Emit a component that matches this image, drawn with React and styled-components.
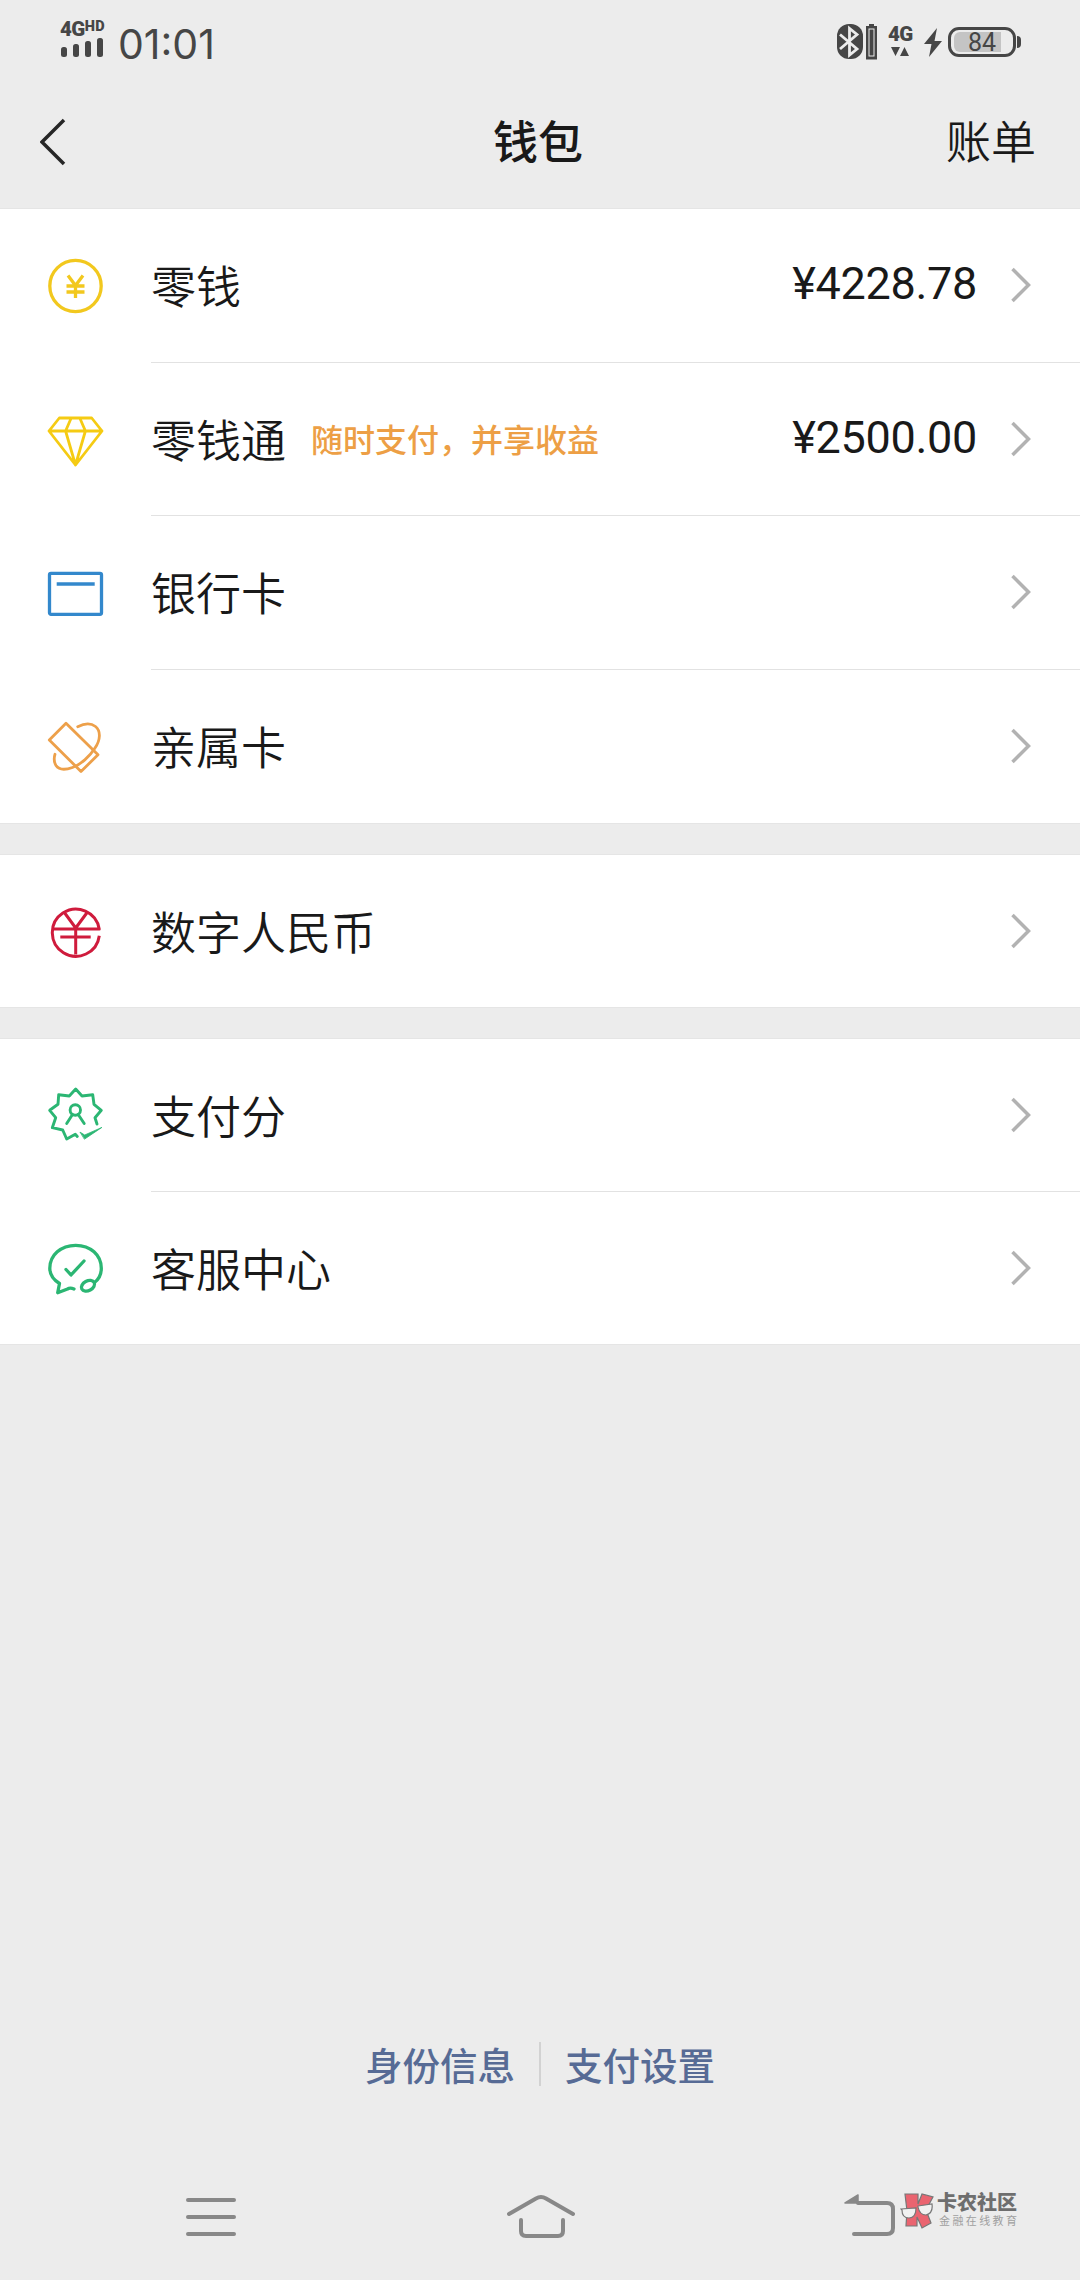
import React from 'react'
import styled, { createGlobalStyle } from 'styled-components'

const GlobalStyle = createGlobalStyle`
    * {
        box-sizing: border-box;
    }

    body {
        margin: 0;
        background: #ececec;
        font-family: 'Noto Sans CJK SC', sans-serif;
        color: #191919;
    }
`

const Page = styled.div`
    position: relative;
    display: flex;
    flex-direction: column;
    width: 1080px;
    height: 2280px;
    overflow: hidden;
    background: #ececec;
`

const StatusBar = styled.div`
    display: flex;
    justify-content: space-between;
    height: 78px;
    padding: 22px 59px 0 60px;
    color: #464646;
`

const StatusSide = styled.div`
    display: flex;
    align-items: flex-start;
`

const Signal = styled.div`
    display: flex;
    flex-direction: column;
    width: 47px;
`

const Network = styled.div`
    display: flex;
    align-items: flex-start;
    height: 15px;
    font: 900 20.5px/15px Roboto, sans-serif;
    letter-spacing: -0.6px;
    white-space: nowrap;
`

const Sup = styled.span`
    font-size: 14.5px;
    font-weight: 900;
    line-height: 10px;
    letter-spacing: 0.3px;
`

const Bars = styled.svg`
    display: block;
    width: 47px;
    height: 20px;
`

const Clock = styled.div`
    margin: 0 0 0 11px;
    font: 400 41px/45px Inter, sans-serif;
    letter-spacing: 0;
`

const StatusIcon = styled.svg`
    display: block;
    width: ${props => props.w}px;
    height: 36px;
    margin: 2px ${props => props.gap || 0}px 0 0;
`

const Mobile = styled.div`
    width: 26px;
    margin: 5px 10px 0 0;
`

const Arrows = styled.svg`
    display: block;
    width: 24px;
    height: 10px;
    margin-top: 5px;
`

const Battery = styled.div`
    display: flex;
    align-items: center;
    width: 68px;
    height: 30px;
    margin-top: 5px;
    padding: 3px;
    border: 3px solid #464646;
    border-radius: 11px;
`

const BatteryLevel = styled.div`
    width: 47px;
    height: 20px;
    padding-left: 14px;
    border-radius: 6px 0 0 6px;
    background: #c4c4c4;
    font: 400 25px/21px Roboto, sans-serif;
    white-space: nowrap;
`

const BatteryCap = styled.div`
    width: 4px;
    height: 12px;
    margin: 14px 0 0 1px;
    border-radius: 0 5px 5px 0;
    background: #464646;
`

const Header = styled.header`
    display: grid;
    grid-template-columns: 1fr auto 1fr;
    align-items: center;
    height: 131px;
    padding: 0 44px 3px 40px;
    border-bottom: 1px solid #e4e4e4;
`

const BackIcon = styled.svg`
    display: block;
    width: 26px;
    height: 48px;
`

const Title = styled.h1`
    margin: 0 0 4px;
    font-size: 45px;
    font-weight: 500;
    line-height: 60px;
`

const Bill = styled.span`
    justify-self: end;
    margin-bottom: 4px;
    font-size: 45px;
    font-weight: 350;
    line-height: 60px;
`

const Group = styled.section`
    display: flex;
    flex-direction: column;
    height: ${props => props.size}px;
    margin-bottom: 32px;
    background: #fff;
    box-shadow: 0 1px 0 #e5e5e5, 0 -1px 0 #e5e5e5;
`

const Row = styled.div`
    display: flex;
    flex: 1;
    align-items: stretch;
    padding-left: 45px;
`

const RowIcon = styled.svg`
    flex: none;
    align-self: center;
    width: 60px;
    height: 60px;
    margin-right: 46px;
    fill: none;
    stroke: ${props => props.color};
    stroke-width: 3.3;
    stroke-linecap: round;
    stroke-linejoin: round;
`

const RowBody = styled.div`
    display: flex;
    flex: 1;
    align-items: center;
    padding-right: 48px;
    border-bottom: ${props => props.last ? 'none' : '1px solid #e2e2e2'};
`

const Label = styled.span`
    font-size: 45px;
    font-weight: 350;
    line-height: 60px;
`

const Hint = styled.span`
    margin: 0 0 2px 25px;
    font-size: 32px;
    font-weight: 500;
    line-height: 44px;
    color: #ed9f45;
`

const Amount = styled.span`
    margin: 0 0 2px auto;
    font: 400 45px/60px Roboto, sans-serif;
    letter-spacing: -0.3px;
`

const Chevron = styled.svg`
    flex: none;
    width: 22px;
    height: 40px;
    margin-left: ${props => props.push ? '33px' : 'auto'};
`

const Links = styled.footer`
    display: flex;
    align-items: center;
    justify-content: center;
    gap: 24px;
    height: 60px;
    margin-top: auto;
    padding-bottom: 3px;
    color: #576b95;
    font-size: 37.5px;
    font-weight: 500;
    line-height: 50px;
`

const Divider = styled.i`
    width: 2px;
    height: 44px;
    background: #d2d2d2;
`

const NavBar = styled.nav`
    display: flex;
    align-items: flex-start;
    justify-content: space-between;
    height: 185px;
    padding: 99px 185px 0 185px;
`

const NavIcon = styled.svg`
    display: block;
    width: ${props => props.w}px;
    height: 46px;
    fill: none;
    stroke: #888;
    stroke-width: 4;
    stroke-linecap: round;
    stroke-linejoin: round;
`

// floats over the navigation bar
const Watermark = styled.div`
    position: absolute;
    right: 60px;
    bottom: 50px;
    display: flex;
    gap: 3px;
    width: 120px;
    height: 38px;
`

const WatermarkText = styled.div`
    display: flex;
    flex-direction: column;
    white-space: nowrap;
`

const WatermarkName = styled.span`
    color: #6e6e6e;
    font-size: 20px;
    font-weight: 900;
    line-height: 20px;
`

const WatermarkSub = styled.span`
    padding: 3px 0 0 2px;
    color: #a0a0a0;
    font-size: 11px;
    letter-spacing: 2.4px;
    line-height: 11px;
`

const icons = {
    coin: (
        <>
            <circle cx="30.5" cy="30" r="25.7" />
            <path d="M23 19.5l7.5 10 7.5-10M30.5 29.5V42M21.5 30h18M21.5 36h18" strokeLinecap="butt" />
        </>
    ),
    diamond: (
        <path d="M14.3 9h32.4L57 22 30.5 56 4 22zM4 22h53M26.2 9l-5.6 13 9.9 34 9.9-34-5.6-13" strokeWidth="2.8" />
    ),
    card: (
        <>
            <rect x="4.5" y="10.3" width="52" height="41" rx="1.5" />
            <path d="M11.7 21h38" strokeLinecap="butt" />
        </>
    ),
    family: (
        <>
            <path d="M21 7.2L4.3 24 36 55.5 53 38.8z" strokeWidth="2.8" />
            <path d="M32.7 10.7C39 7.5 46 7 50.5 10.5C56 15 55.5 24 50 32C45 40 36 48.5 27.5 51.5C21 53.8 14 54 11 49.5C9 46 8.8 42 10 38.3" strokeWidth="2.8" />
        </>
    ),
    digital: (
        <path d="M54.3 34.7A23.6 23.6 0 1 1 54.2 28H7.5M19 11l11.7 16L42.5 11M30.7 27v26.5M15.3 36h30.4" strokeWidth="3" strokeLinecap="butt" />
    ),
    score: (
        <>
            <path d="M32.3 51.5L30.3 49.3 21.7 54 17.7 45 7.3 42.7 10.7 32.7 4.7 25.3 13 19.3 13.7 9.7 24.3 11 30.7 4 37 11 47.7 9.7 49 19.3 56.3 25.3 50 32.7 52 39" strokeWidth="2.9" />
            <circle cx="30.3" cy="25" r="5.2" strokeWidth="2.9" />
            <path d="M27.5 29.5l-5.8 9M33.2 29.5l6 9" strokeWidth="2.9" />
            <path d="M35.3 47.3l4.4 2.7 17.2-7.6-17.2 11.6z" fill="#2bb673" strokeWidth="0.8" />
        </>
    ),
    service: (
        <>
            <path d="M29 51C26.5 50 24.5 49.8 22.5 51L12.7 54.7 14.5 45.5C8 41.5 4.8 36 4.8 30.3C4.8 17 16 7.3 30.7 7.3S56.3 17 56.3 30.3C56.3 36 53.5 41.5 49.5 44.5" />
            <ellipse cx="43" cy="47.8" rx="7" ry="4.8" transform="rotate(-28 43 47.8)" />
            <path d="M21 31.5l5 5.5L39 23" />
        </>
    ),
}

const groups = [
    {
        size: 614,
        rows: [
            { icon: 'coin', color: '#f2c81e', label: '零钱', amount: '¥4228.78' },
            { icon: 'diamond', color: '#f5cb13', label: '零钱通', hint: '随时支付，并享收益', amount: '¥2500.00' },
            { icon: 'card', color: '#3388cc', label: '银行卡' },
            { icon: 'family', color: '#eda04a', label: '亲属卡' },
        ],
    },
    {
        size: 152,
        rows: [{ icon: 'digital', color: '#cf1b3c', label: '数字人民币' }],
    },
    {
        size: 305,
        rows: [
            { icon: 'score', color: '#2bb673', label: '支付分' },
            { icon: 'service', color: '#2bb673', label: '客服中心' },
        ],
    },
]

function Status() {
    return (
        <StatusBar>
            <StatusSide>
                <Signal>
                    <Network>4G<Sup>HD</Sup></Network>
                    <Bars viewBox="0 0 47 20" fill="#464646">
                        <rect x="1" y="10" width="6" height="10" rx="2.5" />
                        <rect x="13" y="7" width="6" height="13" rx="2.5" />
                        <rect x="25" y="4" width="6" height="16" rx="2.5" />
                        <rect x="37" y="1" width="6" height="19" rx="2.5" />
                    </Bars>
                </Signal>
                <Clock>01:01</Clock>
            </StatusSide>
            <StatusSide>
                <StatusIcon w={26} gap={3} viewBox="0 0 26 36">
                    <rect width="26" height="35" rx="12" fill="#464646" />
                    <path d="M3 10.5L20 25l-7.500 6V4.500L20 10.500 3 25" fill="none" stroke="#ececec" strokeWidth="2.8" />
                </StatusIcon>
                <StatusIcon w={11} gap={11} viewBox="0 0 11 36">
                    <path d="M3 0h5v2h3v33.5H0V2h3z" fill="#464646" />
                    <rect x="3" y="5" width="5" height="27" fill="#464646" stroke="#ececec" />
                </StatusIcon>
                <Mobile>
                    <Network>4G</Network>
                    <Arrows viewBox="0 0 24 10" fill="#464646">
                        <path d="M3 0h9L7.5 9zM12 9h9L16.5 0z" />
                    </Arrows>
                </Mobile>
                <StatusIcon w={18} gap={6} viewBox="0 0 18 36">
                    <path d="M13 4L0 20h7.5L5 33 18 17h-7.5z" fill="#464646" />
                </StatusIcon>
                <Battery>
                    <BatteryLevel>84</BatteryLevel>
                </Battery>
                <BatteryCap />
            </StatusSide>
        </StatusBar>
    )
}

function WalletRow({ item, last }) {
    return (
        <Row>
            <RowIcon viewBox="0 0 60 60" color={item.color}>{icons[item.icon]}</RowIcon>
            <RowBody last={last}>
                <Label>{item.label}</Label>
                {item.hint && <Hint>{item.hint}</Hint>}
                {item.amount && <Amount>{item.amount}</Amount>}
                <Chevron push={item.amount} viewBox="0 0 22 40">
                    <path d="M2.5 4L18.5 20 2.5 36" fill="none" stroke="#b2b2b2" strokeWidth="3.5" />
                </Chevron>
            </RowBody>
        </Row>
    )
}

function Logo() {
    return (
        <svg width="34" height="38" viewBox="0 0 34 38">
            <path d="M5 2h13v10l4-10 11 3-7 13 5 13-9 5-5-11v9H6l1-15z" fill="#ea6470" stroke="#777" strokeWidth="1.2" />
            <path d="M1 17l15-1c0 7-3 10-7 10-5 0-7-3-7-8zM18 14l14-2c1 7-2 10-6 11-4 0-7-3-8-8z" fill="#f1f1f1" stroke="#777" strokeWidth="1.2" />
        </svg>
    )
}

function App() {
    return (
        <Page>
            <GlobalStyle />
            <Status />
            <Header>
                <BackIcon viewBox="0 0 26 48">
                    <path d="M24 2L2 24l22 22" fill="none" stroke="#262626" strokeWidth="3.5" />
                </BackIcon>
                <Title>钱包</Title>
                <Bill>账单</Bill>
            </Header>
            {groups.map((group, i) => (
                <Group key={i} size={group.size}>
                    {group.rows.map((item, j) => (
                        <WalletRow key={item.label} item={item} last={j === group.rows.length - 1} />
                    ))}
                </Group>
            ))}
            <Links>
                <span>身份信息</span>
                <Divider />
                <span>支付设置</span>
            </Links>
            <NavBar>
                <NavIcon w={52} viewBox="0 0 52 46">
                    <path d="M3 6h46M3 23h46M3 40h46" />
                </NavIcon>
                <NavIcon w={72} viewBox="0 0 72 46">
                    <path d="M4 20L31 4.500q5-3 10 0L68 20M16 26v11q0 5 5 5h32q5 0 5-5V26" />
                </NavIcon>
                <NavIcon w={51} viewBox="0 0 51 46">
                    <path d="M14 9h29q6 0 6 6v19q0 6-6 6H10" />
                    <path d="M1 9L14 1v8z" fill="#888" strokeWidth="1.5" />
                </NavIcon>
            </NavBar>
            <Watermark>
                <Logo />
                <WatermarkText>
                    <WatermarkName>卡农社区</WatermarkName>
                    <WatermarkSub>金融在线教育</WatermarkSub>
                </WatermarkText>
            </Watermark>
        </Page>
    )
}

export default App
